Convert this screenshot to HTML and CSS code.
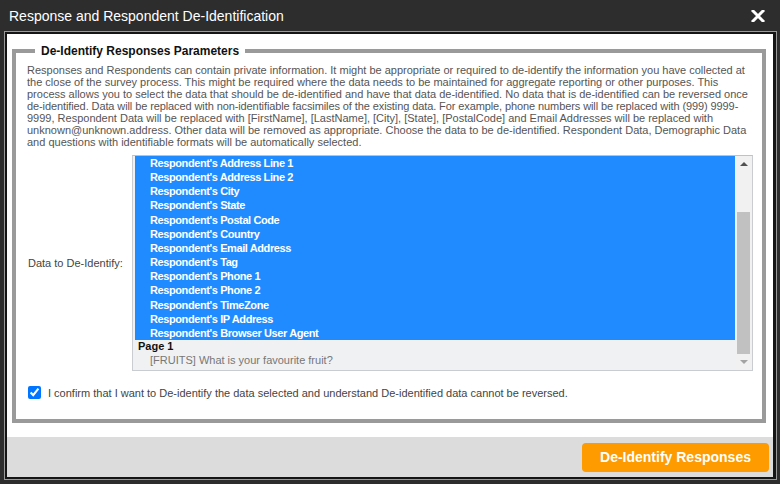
FILE: index.html
```html
<!doctype html>
<html lang="en">
  <head>
    <meta charset="UTF-8" />
    <meta name="viewport" content="width=device-width, initial-scale=1.0" />
    <title>Response and Respondent De-Identification</title>
    <link rel="stylesheet" href="styles.css">
  </head>
  <body>
    <div class="dialog">
      <div class="titlebar">
        <span class="title">Response and Respondent De-Identification</span>
        <button class="close" title="Close">
          <svg width="14" height="12" viewBox="0 0 14 12">
            <path d="M2 1 L12 11 M12 1 L2 11" stroke="#fff" stroke-width="3" stroke-linecap="square" fill="none" />
          </svg>
        </button>
      </div>

      <div class="frame">
        <div class="content">
          <fieldset class="params">
            <legend>De-Identify Responses Parameters</legend>
            <p class="intro">Responses and Respondents can contain private information. It might be appropriate or required to de-identify the information you have collected at the close of the survey process. This might be required where the data needs to be maintained for aggregate reporting or other purposes. This process allows you to select the data that should be de-identified and have that data de-identified. No data that is de-identified can be reversed once <span class="tight">de-identified. Data will be replaced with non-identifiable facsimiles of the existing data. For example, phone numbers will be replaced with (999) 9999-</span><wbr>9999, Respondent Data will be replaced with [FirstName], [LastName], [City], [State], [PostalCode] and Email Addresses will be replaced with unknown@unknown.address. Other data will be removed as appropriate. Choose the data to be de-identified. Respondent Data, Demographic Data and questions with identifiable formats will be automatically selected.</p>

            <div class="field-row">
              <label class="field-label">Data to De-Identify:</label>
              <div class="listbox">
                <div class="options">
                  <div class="option selected">Respondent's Address Line 1</div>
                  <div class="option selected">Respondent's Address Line 2</div>
                  <div class="option selected">Respondent's City</div>
                  <div class="option selected">Respondent's State</div>
                  <div class="option selected">Respondent's Postal Code</div>
                  <div class="option selected">Respondent's Country</div>
                  <div class="option selected">Respondent's Email Address</div>
                  <div class="option selected">Respondent's Tag</div>
                  <div class="option selected">Respondent's Phone 1</div>
                  <div class="option selected">Respondent's Phone 2</div>
                  <div class="option selected">Respondent's TimeZone</div>
                  <div class="option selected">Respondent's IP Address</div>
                  <div class="option selected">Respondent's Browser User Agent</div>
                  <div class="group">Page 1</div>
                  <div class="option">[FRUITS] What is your favourite fruit?</div>
                </div>
                <div class="scrollbar">
                  <span class="arrow up"></span>
                  <div class="track"><div class="thumb"></div></div>
                  <span class="arrow down"></span>
                </div>
              </div>
            </div>

            <label class="confirm">
              <input type="checkbox" checked />
              I confirm that I want to De-identify the data selected and understand De-identified data cannot be reversed.
            </label>
          </fieldset>
        </div>

        <div class="footer">
          <button class="primary">De-Identify Responses</button>
        </div>
      </div>
    </div>
  </body>
</html>
```

FILE: styles.css
```css
html, body {
  margin: 0;
  height: 100%;
}
body {
  background-color: #2d2d2d;
  font-family: "Liberation Sans", Arial, sans-serif;
}
.dialog {
  display: flex;
  flex-direction: column;
  height: 484px;
}
.titlebar {
  height: 31px;
  display: flex;
  align-items: center;
  justify-content: space-between;
  padding: 0 15px 0 9px;
  color: white;
}
.title {
  font-size: 14px;
}
.close {
  background: none;
  border: none;
  padding: 0;
  cursor: pointer;
  display: flex;
}
.frame {
  flex: 1;
  margin: 0 3px 4px 4px;
  border: 1px solid #9a9a9a;
  padding: 2px 3px 2px 2px;
  background-color: #151515;
  display: flex;
  flex-direction: column;
}
.content {
  background-color: white;
  padding: 10px 7px 8px 5px;
  flex: 1;
}
.params {
  margin: 0;
  border: 4px solid #9a9a9a;
  padding: 6px 9px 20px 11px;
}
.params legend {
  font-size: 12px;
  font-weight: bold;
  color: #111;
  margin-left: 8px;
  padding: 0 6px;
}
.intro {
  margin: 0 0 7px 0;
  font-size: 11px;
  line-height: 12px;
  color: #555;
}
.intro .tight {
  letter-spacing: -0.1px;
}
.field-row {
  display: flex;
  align-items: center;
}
.field-label {
  width: 105px;
  padding-left: 1px;
  box-sizing: border-box;
  font-size: 11px;
  color: #444;
}
.listbox {
  flex: 1;
  height: 216px;
  box-sizing: border-box;
  border: 1px solid #c9cdd2;
  border-top-color: #a9c6e4;
  background-color: #eff1f3;
  display: flex;
}
.options {
  flex: 1;
  padding-left: 2px;
  overflow: hidden;
}
.option {
  font-size: 11px;
  line-height: 14.15px;
  padding-left: 15px;
  color: #777;
  white-space: nowrap;
}
.option.selected {
  background-color: #1f8bff;
  color: white;
  font-weight: bold;
  letter-spacing: -0.4px;
}
.group {
  font-size: 11px;
  line-height: 13.5px;
  font-weight: bold;
  color: #111;
  padding-left: 3px;
}
.options .group + .option {
  line-height: 13.5px;
}
.scrollbar {
  width: 17px;
  background-color: #f1f1f1;
  display: flex;
  flex-direction: column;
  align-items: center;
}
.arrow {
  height: 17px;
  width: 17px;
  display: flex;
  align-items: center;
  justify-content: center;
}
.arrow::before {
  content: "";
  border-left: 4px solid transparent;
  border-right: 4px solid transparent;
}
.arrow.up::before {
  border-bottom: 4px solid #505050;
}
.arrow.down::before {
  border-top: 4px solid #a3a3a3;
}
.track {
  flex: 1;
  width: 100%;
  padding-top: 39px;
  box-sizing: border-box;
}
.thumb {
  margin: 0 2px;
  height: 142px;
  background-color: #c1c1c1;
}
.confirm {
  display: flex;
  align-items: center;
  gap: 7px;
  margin-top: 15px;
  padding-left: 1px;
  font-size: 11px;
  color: #444;
}
.confirm input {
  margin: 0;
  width: 13px;
  height: 13px;
}
.footer {
  height: 40px;
  background-color: #dcdcdc;
  display: flex;
  align-items: center;
  justify-content: flex-end;
  padding: 0 4px;
}
.primary {
  height: 29px;
  width: 187px;
  background-color: #fd9b00;
  color: white;
  border: none;
  border-radius: 4px;
  font-family: "Liberation Sans", Arial, sans-serif;
  font-size: 14px;
  font-weight: bold;
  cursor: pointer;
}
```
